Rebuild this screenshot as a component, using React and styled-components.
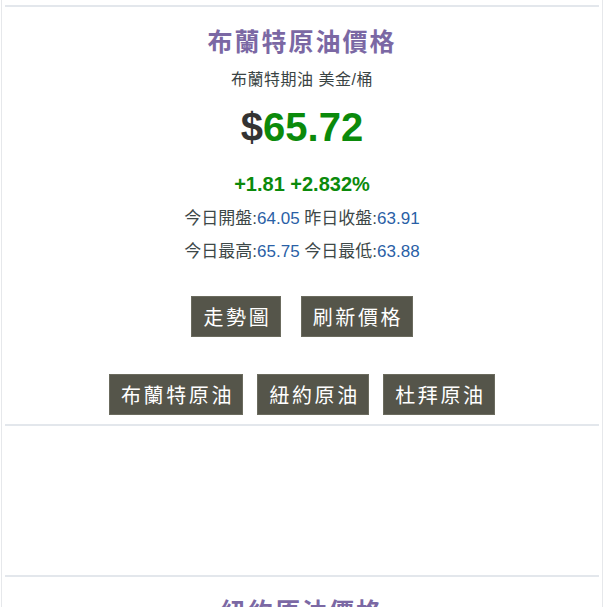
import React from "react";
import styled, { createGlobalStyle } from "styled-components";

const GlobalStyle = createGlobalStyle`
  html, body { margin: 0; padding: 0; background: #ffffff; }
  body {
    font-family: "Liberation Sans", Arial, "Noto Sans CJK TC", sans-serif;
    color: #333;
  }
`;

const Page = styled.div`
  margin-left: 1px;
  width: 602px;
  box-sizing: border-box;
  border-left: 1px solid #e6e8eb;
  border-right: 1px solid #e6e8eb;
  padding: 5px 3px 0;
  min-height: 607px;
`;

const Card = styled.section`
  border-top: 2px solid #e3e7ec;
  padding: 17px 0 9px;
  display: flex;
  flex-direction: column;
  align-items: center;
  text-align: center;
`;

const Title = styled.h2`
  margin: 0;
  font-size: 25px;
  letter-spacing: 2px;
  line-height: 36px;
  font-weight: bold;
  color: #7b68a4;
  font-family: "Liberation Sans", Arial, "Noto Sans CJK TC", sans-serif;
`;

const Subtitle = styled.div`
  margin-top: 9px;
  font-size: 16px;
  line-height: 22px;
  color: #3a4444;
  letter-spacing: 0.5px;
`;

const Price = styled.div`
  margin-top: 12px;
  font-size: 40px;
  line-height: 48px;
  font-weight: bold;
  color: #333;
`;

const Green = styled.span`
  color: #0b8a0b;
`;

const Change = styled.div`
  margin-top: 19px;
  font-size: 20px;
  line-height: 28px;
  font-weight: bold;
  color: #0b8a0b;
`;

const InfoList = styled.div`
  margin-top: 4px;
  display: flex;
  flex-direction: column;
`;

const InfoLine = styled.div`
  font-size: 17px;
  line-height: 33px;
  color: #3d4848;
`;

const Value = styled.span`
  color: #2a5fa6;
`;

const ButtonRow = styled.div`
  display: flex;
  justify-content: center;
  gap: ${(p) => p.$gap}px;
  margin-top: ${(p) => p.$top}px;
`;

const Button = styled.button`
  height: 41px;
  padding: 0 11px;
  border: 1px solid #6b6b5e;
  background: #55554a;
  color: #ffffff;
  font-size: 20px;
  letter-spacing: 2.6px;
  font-family: "Noto Sans CJK TC", sans-serif;
  cursor: pointer;
  display: flex;
  align-items: center;
  justify-content: center;
  & > span { margin-right: -2.6px; }
`;

const AdSlot = styled.div`
  border-top: 2px solid #e3e7ec;
  height: 149px;
`;

const data = [
  {
    title: "布蘭特原油價格",
    sub: "布蘭特期油 美金/桶",
    price: "65.72",
    change: "+1.81 +2.832%",
    open: "64.05",
    prev: "63.91",
    high: "65.75",
    low: "63.88",
  },
  {
    title: "紐約原油價格",
    sub: "紐約期油 美金/桶",
    price: "62.35",
    change: "+1.72 +2.837%",
    open: "60.71",
    prev: "60.63",
    high: "62.41",
    low: "60.52",
  },
];

function OilCard({ d }) {
  return (
    <Card>
      <Title>{d.title}</Title>
      <Subtitle>{d.sub}</Subtitle>
      <Price>
        $<Green>{d.price}</Green>
      </Price>
      <Change>{d.change}</Change>
      <InfoList>
        <InfoLine>
          今日開盤:<Value>{d.open}</Value> 昨日收盤:<Value>{d.prev}</Value>
        </InfoLine>
        <InfoLine>
          今日最高:<Value>{d.high}</Value> 今日最低:<Value>{d.low}</Value>
        </InfoLine>
      </InfoList>
      <ButtonRow $gap={20} $top={28}>
        <Button><span>走勢圖</span></Button>
        <Button><span>刷新價格</span></Button>
      </ButtonRow>
      <ButtonRow $gap={14} $top={37}>
        <Button><span>布蘭特原油</span></Button>
        <Button><span>紐約原油</span></Button>
        <Button><span>杜拜原油</span></Button>
      </ButtonRow>
    </Card>
  );
}

export default function App() {
  return (
    <>
      <GlobalStyle />
      <Page>
        <OilCard d={data[0]} />
        <AdSlot />
        <OilCard d={data[1]} />
      </Page>
    </>
  );
}
